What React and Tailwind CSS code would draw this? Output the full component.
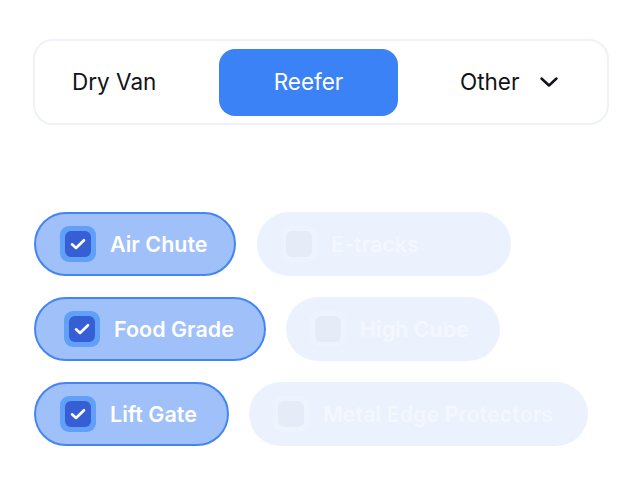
import React from "react";

function Check() {
  return (
    <svg width="16" height="12" viewBox="0 0 16 12" fill="none">
      <path d="M2 6.3 L6 10 L14 2.2" stroke="white" strokeWidth="2.6" strokeLinecap="round" strokeLinejoin="round" />
    </svg>
  );
}

function Chip({ label, active, w, pl = "pl-[24px]" }) {
  if (active) {
    return (
      <div className={`h-[64px] ${w} ${pl} flex items-center rounded-full border-2 border-[#4585f2] bg-[#9fc0f8]`}>
        <div className="w-[36px] h-[36px] rounded-[9px] bg-[#60a0f8] flex items-center justify-center shrink-0">
          <div className="w-[26px] h-[26px] rounded-[6px] bg-[#365fd6] flex items-center justify-center">
            <Check />
          </div>
        </div>
        <span className="ml-[14px] text-[21.5px] font-semibold text-white whitespace-nowrap">{label}</span>
      </div>
    );
  }
  return (
    <div className={`h-[64px] ${w} ${pl} flex items-center rounded-full bg-[#ecf2fd]`}>
      <div className="w-[36px] h-[36px] rounded-[9px] bg-[#eef3fd] flex items-center justify-center shrink-0">
        <div className="w-[26px] h-[26px] rounded-[6px] bg-[#e6ecf7]" />
      </div>
      <span className="ml-[14px] text-[21.5px] font-semibold text-[#f4f7fe] whitespace-nowrap">{label}</span>
    </div>
  );
}

export default function App() {
  return (
    <div className="w-[642px] h-[488px] bg-white" style={{ fontFamily: "Inter, 'Noto Sans', sans-serif" }}>
      <div className="pt-[39px] pl-[33px]">
        <div className="w-[576px] h-[86px] rounded-[20px] border-2 border-[#eef2f7] flex items-center">
          <div className="w-[184px] h-[67px] flex items-center pl-[37px] text-[22.5px] text-[#111318]">Dry Van</div>
          <div className="w-[179px] h-[67px] rounded-[16px] bg-[#3b82f6] flex items-center justify-center text-[22.5px] text-white">Reefer</div>
          <div className="flex-1 h-[67px] flex items-center pl-[62px] gap-[20px] text-[22.5px] text-[#111318]">
            <span>Other</span>
            <svg width="20" height="12" viewBox="0 0 20 12" fill="none">
              <path d="M2.5 2.5 L10 9.5 L17.5 2.5" stroke="#111318" strokeWidth="2.5" strokeLinecap="round" strokeLinejoin="round" />
            </svg>
          </div>
        </div>
      </div>
      <div className="mt-[87px] pl-[34px] flex flex-col gap-[21px]">
        <div className="flex gap-[21px]">
          <Chip label="Air Chute" active w="w-[202px]" />
          <Chip label="E-tracks" w="w-[254px]" />
        </div>
        <div className="flex gap-[20px]">
          <Chip label="Food Grade" active w="w-[232px]" pl="pl-[28px]" />
          <Chip label="High Cube" w="w-[214px]" />
        </div>
        <div className="flex gap-[20px]">
          <Chip label="Lift Gate" active w="w-[195px]" />
          <Chip label="Metal Edge Protectors" w="w-[339px]" />
        </div>
      </div>
    </div>
  );
}
